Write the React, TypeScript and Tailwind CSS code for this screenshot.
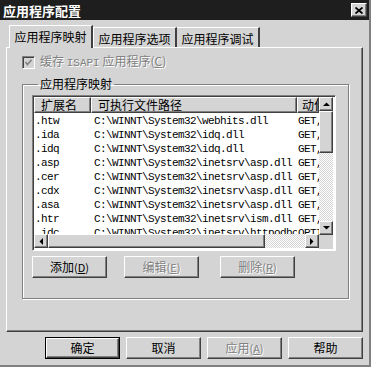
import React from 'react';

const raised =
  'border border-t-white border-l-white border-r-[#404040] border-b-[#404040] shadow-[inset_-1px_-1px_0_#808080] bg-[#d4d4d4]';
const sunken =
  'border border-t-[#808080] border-l-[#808080] border-r-white border-b-white shadow-[inset_1px_1px_0_#404040]';
const dither = 'bg-[repeating-conic-gradient(#ffffff_0%_25%,#d4d4d4_0%_50%)] bg-[length:2px_2px]';
const disabledText = 'text-[#808080] [text-shadow:1px_1px_0_#ffffff]';

const rows = [
  ['.htw', 'C:\\WINNT\\System32\\webhits.dll', 'GET,'],
  ['.ida', 'C:\\WINNT\\System32\\idq.dll', 'GET,'],
  ['.idq', 'C:\\WINNT\\System32\\idq.dll', 'GET,'],
  ['.asp', 'C:\\WINNT\\System32\\inetsrv\\asp.dll', 'GET,'],
  ['.cer', 'C:\\WINNT\\System32\\inetsrv\\asp.dll', 'GET,'],
  ['.cdx', 'C:\\WINNT\\System32\\inetsrv\\asp.dll', 'GET,'],
  ['.asa', 'C:\\WINNT\\System32\\inetsrv\\asp.dll', 'GET,'],
  ['.htr', 'C:\\WINNT\\System32\\inetsrv\\ism.dll', 'GET,'],
  ['.idc', 'C:\\WINNT\\System32\\inetsrv\\httpodbc.dll', 'OPTI'],
];

function Arrow({ dir }: { dir: 'up' | 'down' | 'left' | 'right' }) {
  const pts = {
    up: '0,4 7,4 3.5,0.5',
    down: '0,0 7,0 3.5,3.5',
    left: '4,0 4,7 0.5,3.5',
    right: '0,0 0,7 3.5,3.5',
  }[dir];
  const horiz = dir === 'up' || dir === 'down';
  return (
    <svg width={horiz ? 7 : 4} height={horiz ? 4 : 7} viewBox={horiz ? '0 0 7 4' : '0 0 4 7'}>
      <polygon points={pts} fill="#000" />
    </svg>
  );
}

function Btn({
  label,
  hot,
  disabled,
  isDefault,
  x,
}: {
  label: string;
  hot?: string;
  disabled?: boolean;
  isDefault?: boolean;
  x?: string;
}) {
  const inner = (
    <div
      className={`flex h-full w-full items-center justify-center text-[12px] ${raised} ${
        disabled ? disabledText : 'text-black'
      }`}
    >
      {label}
      {hot && (
        <span className="text-[11px]">
          (<span className="underline">{hot}</span>)
        </span>
      )}
    </div>
  );
  return (
    <div className={`h-[22px] w-[75px] ${x ?? ''} ${isDefault ? 'border border-black' : ''}`}>{inner}</div>
  );
}

export default function App() {
  return (
    <div
      className="relative h-[367px] w-[371px] overflow-hidden bg-[#d4d4d4] text-black border-r-[2px] border-b-[2px] border-r-[#808080] border-b-[#808080]"
      style={{ fontFamily: '"Noto Sans CJK SC", "Liberation Sans", sans-serif' }}
    >
      {/* title bar */}
      <div className="flex h-[20px] items-center justify-between bg-[#1e1e1e] pl-[3px] pr-[2px]">
        <span className="text-[13px] font-bold leading-none text-white">应用程序配置</span>
        <div className={`flex h-[14px] w-[16px] items-center justify-center ${raised}`}>
          <svg width="8" height="7" viewBox="0 0 8 7">
            <path d="M0.5 0.5 L7.5 6.5 M7.5 0.5 L0.5 6.5" stroke="#000" strokeWidth="1.8" />
          </svg>
        </div>
      </div>

      <div className="px-[6px]">
        {/* tabs */}
        <div className="relative z-10 mt-[4px] flex h-[23px] items-end pl-[3px]">
          <div className="-mb-[1px] flex h-[23px] w-[84px] items-start justify-center border-l border-t border-r-2 border-l-white border-t-white border-r-[#404040] bg-[#d4d4d4] pt-[2px] text-[12px]">
            应用程序映射
          </div>
          <div className="flex h-[20px] w-[84px] items-start justify-center border-l border-t border-r-2 border-l-white border-t-white border-r-[#404040] pt-[2px] text-[12px]">
            应用程序选项
          </div>
          <div className="flex h-[20px] w-[83px] items-start justify-center border-t border-r-2 border-t-white border-r-[#404040] pt-[2px] text-[12px]">
            应用程序调试
          </div>
        </div>

        {/* panel */}
        <div className="h-[285px] border border-t-white border-l-white border-r-[#404040] border-b-[#404040] shadow-[inset_-1px_-1px_0_#808080] pl-[15px] pr-[13px] pt-[7px]">
          <div className="flex h-[14px] items-center">
            <div className="flex h-[13px] w-[13px] items-center justify-center border border-t-[#808080] border-l-[#808080] border-r-white border-b-white bg-[#d4d4d4] shadow-[inset_1px_1px_0_#404040]">
              <svg width="7" height="7" viewBox="0 0 7 7">
                <path d="M0.5 3 L2.5 5.5 L6.5 0.8" stroke="#808080" strokeWidth="1.6" fill="none" />
              </svg>
            </div>
            <span className={`ml-[5px] text-[12px] ${disabledText}`}>
              缓存 <span style={{ fontFamily: '"Liberation Mono", monospace' }} className="text-[11px]">ISAPI</span> 应用程序(
              <span className="underline">C</span>)
            </span>
          </div>

          <fieldset className="mt-[8px] h-[222px] border border-[#808080] pl-[9px] shadow-[1px_1px_0_#ffffff,inset_1px_1px_0_#ffffff]">
            <legend className="ml-[6px] px-[2px] text-[12px] leading-[14px]">应用程序映射</legend>

            {/* list view */}
            <div className={`mt-[4px] flex h-[156px] w-[304px] bg-white ${sunken} p-[1px]`}>
              <div className="flex w-[285px] flex-col">
                <div className="flex h-[16px] text-[12px] leading-none">
                  <div className={`flex w-[57px] items-center pl-[6px] ${raised}`}>扩展名</div>
                  <div className={`flex w-[206px] items-center pl-[6px] ${raised}`}>可执行文件路径</div>
                  <div className={`flex w-[22px] items-center overflow-hidden whitespace-nowrap pl-[4px] ${raised}`}>动作</div>
                </div>
                <div
                  className="h-[121px] overflow-hidden pt-[1px] text-[11px] tracking-[-0.6px]"
                  style={{ fontFamily: '"Liberation Mono", monospace' }}
                >
                  {rows.map((r) => (
                    <div key={r[0]} className="flex h-[14px] items-center whitespace-nowrap">
                      <span className="w-[57px] shrink-0 overflow-hidden pl-[1px]">{r[0]}</span>
                      <span className="w-[206px] shrink-0 overflow-hidden pl-[3px]">{r[1]}</span>
                      <span className="w-[22px] shrink-0 overflow-hidden pl-[1px]">{r[2]}</span>
                    </div>
                  ))}
                </div>
                <div className={`flex h-[14px] ${dither}`}>
                  <div className={`flex w-[14px] items-center justify-center ${raised}`}>
                    <Arrow dir="left" />
                  </div>
                  <div className={`w-[217px] ${raised}`} />
                  <div className="flex-1" />
                  <div className={`flex w-[14px] items-center justify-center ${raised}`}>
                    <Arrow dir="right" />
                  </div>
                </div>
              </div>
              <div className="flex w-[14px] flex-col">
                <div className={`flex flex-1 flex-col ${dither}`}>
                  <div className={`flex h-[14px] items-center justify-center ${raised}`}>
                    <Arrow dir="up" />
                  </div>
                  <div className={`h-[42px] ${raised}`} />
                  <div className="flex-1" />
                  <div className={`flex h-[14px] items-center justify-center ${raised}`}>
                    <Arrow dir="down" />
                  </div>
                </div>
                <div className="h-[14px] bg-[#d4d4d4]" />
              </div>
            </div>

            <div className="mt-[5px] flex">
              <Btn label="添加" hot="D" />
              <Btn label="编辑" hot="E" disabled x="ml-[17px]" />
              <Btn label="删除" hot="R" disabled x="ml-[21px]" />
            </div>
          </fieldset>
        </div>

        {/* bottom buttons */}
        <div className="mt-[5px] flex justify-end gap-[6px]">
          <Btn label="确定" isDefault />
          <Btn label="取消" />
          <Btn label="应用" hot="A" disabled />
          <Btn label="帮助" />
        </div>
      </div>
    </div>
  );
}
